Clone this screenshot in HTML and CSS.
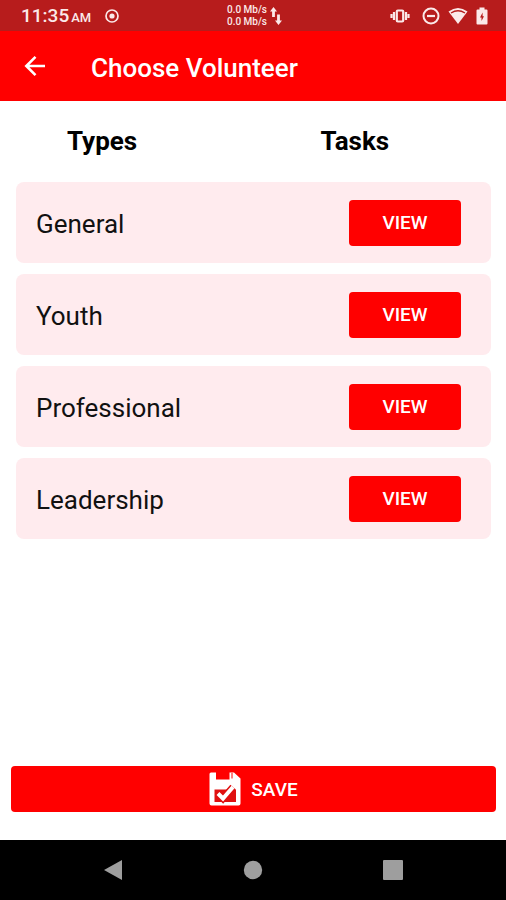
FILE: index.html
```html
<!DOCTYPE html>
<html lang="en">

<head>
    <meta charset="UTF-8">
    <meta name="viewport" content="width=device-width, initial-scale=1.0">
    <title>Choose Volunteer</title>
    <link rel="stylesheet" href="styles.css">
</head>

<body>
    <div class="status-bar">
        <div class="status-left">
            <div class="clock">
                <span>11:35</span>
                <span class="clock-period">AM</span>
            </div>
            <svg width="14" height="14" viewBox="0 0 14 14" fill="none" stroke="currentColor">
                <circle cx="7" cy="7" r="6" stroke-width="1.7" />
                <circle cx="7" cy="7" r="2.6" fill="currentColor" stroke="none" />
            </svg>
        </div>
        <div class="status-center">
            <div class="net-speed">
                <span>0.0 Mb/s</span>
                <span>0.0 Mb/s</span>
            </div>
            <svg width="12" height="20" viewBox="0 0 12 20" fill="currentColor">
                <path d="M3.5 1L7 5.5H4.9V11H2.1V5.5H0z" />
                <path d="M8.5 19L5 14.5H7.1V8.5H9.9V14.5H12z" />
            </svg>
        </div>
        <div class="status-right">
            <svg width="20" height="16" viewBox="0 0 20 16">
                <path d="M1.5 6V10M4 4V12M16 4V12M18.5 6V10" stroke="currentColor" stroke-width="2.2" fill="none" />
                <rect x="6.8" y="2.5" width="6.4" height="11" rx="1" fill="none" stroke="currentColor" stroke-width="2.2" />
            </svg>
            <svg width="18" height="18" viewBox="0 0 18 18" fill="none" stroke="currentColor">
                <circle cx="9" cy="9" r="7.5" stroke-width="2" />
                <path d="M5 9H13" stroke-width="2.2" />
            </svg>
            <svg width="20" height="18" viewBox="0 0 20 18">
                <path d="M0.5 4.5Q10 -2.5 19.5 4.5L10 17z" fill="currentColor" />
                <path d="M3 6Q10 1.5 17 6" fill="none" stroke="#b71c1c" stroke-width="1.3" />
            </svg>
            <svg width="12" height="18" viewBox="0 0 12 18">
                <path d="M3.5 0.5H8.5V2.5H10.5Q11.5 2.5 11.5 3.5V16.5Q11.5 17.5 10.5 17.5H1.5Q0.5 17.5 0.5 16.5V3.5Q0.5 2.5 1.5 2.5H3.5z" fill="currentColor" />
                <path d="M6.6 5.5L4 10.5H5.5V14L8 9.3H6.6z" fill="#b71c1c" />
            </svg>
        </div>
    </div>

    <header class="app-bar">
        <button class="back-button" aria-label="Back">
            <svg width="22" height="22" viewBox="0 0 22 22" fill="none" stroke="currentColor" stroke-width="2.6">
                <path d="M21 11H3M11.5 1.8L2.3 11L11.5 20.2" />
            </svg>
        </button>
        <h1>Choose Volunteer</h1>
    </header>

    <main>
        <table class="volunteer-table">
            <thead>
                <tr>
                    <th scope="col">Types</th>
                    <th scope="col">Tasks</th>
                </tr>
            </thead>
            <tbody>
                <tr>
                    <td>General</td>
                    <td><button class="btn view-button">VIEW</button></td>
                </tr>
                <tr>
                    <td>Youth</td>
                    <td><button class="btn view-button">VIEW</button></td>
                </tr>
                <tr>
                    <td>Professional</td>
                    <td><button class="btn view-button">VIEW</button></td>
                </tr>
                <tr>
                    <td>Leadership</td>
                    <td><button class="btn view-button">VIEW</button></td>
                </tr>
            </tbody>
        </table>

        <button class="btn save-button">
            <svg width="32" height="34" viewBox="0 0 32 34">
                <path d="M2 0.5H7V7.5H20.5V0.5H25L31.5 6.5V31.5Q31.5 33.5 29.5 33.5H2.5Q0.5 33.5 0.5 31.5V2Q0.5 0.5 2 0.5z" fill="#fff" />
                <path d="M23 1V6.5" stroke="#f00" stroke-width="1" />
                <rect x="5.5" y="17.5" width="21.5" height="12.5" fill="#e01010" />
                <path d="M9 21.5L14 26.5L24 15" fill="none" stroke="#e01010" stroke-width="7" />
                <path d="M9 21.5L14 26.5L24 15" fill="none" stroke="#fff" stroke-width="4" />
            </svg>
            SAVE
        </button>
    </main>

    <nav class="nav-bar">
        <button aria-label="Back">
            <svg width="20" height="22" viewBox="0 0 20 22"><path d="M19 1V21L1 11z" fill="currentColor" /></svg>
        </button>
        <button aria-label="Home">
            <svg width="20" height="20" viewBox="0 0 20 20"><circle cx="10" cy="10" r="9.2" fill="currentColor" /></svg>
        </button>
        <button aria-label="Recent apps">
            <svg width="20" height="20" viewBox="0 0 20 20"><rect width="20" height="20" rx="1" fill="currentColor" /></svg>
        </button>
    </nav>
</body>

</html>
```
FILE: styles.css
```css
* {
    box-sizing: border-box;
}

body {
    display: flex;
    flex-direction: column;
    min-height: 100vh;
    margin: 0;
    font-family: Roboto, sans-serif;
    background-color: #fff;
    color: #111;
}

button {
    padding: 0;
    border: none;
    background: none;
    color: inherit;
    font-family: inherit;
    cursor: pointer;
}

svg {
    display: block;
    flex-shrink: 0;
}

.status-bar {
    display: grid;
    grid-template-columns: 1fr auto 1fr;
    align-items: center;
    height: 31px;
    padding: 0 18px 0 21px;
    background-color: #b71c1c;
    color: #fbe9e9;
}

.status-left,
.status-center,
.status-right {
    display: flex;
    align-items: center;
}

.status-left {
    gap: 14px;
}

.status-center {
    gap: 3px;
}

.status-right {
    justify-content: flex-end;
    gap: 8px;
}

.status-right svg:first-child {
    margin-right: 4px;
}

.clock {
    display: flex;
    align-items: baseline;
    gap: 2px;
    font-size: 19px;
    font-weight: 500;
}

.clock-period {
    font-size: 13px;
}

.net-speed {
    display: flex;
    flex-direction: column;
    font-size: 10px;
    font-weight: 500;
    line-height: 12px;
}

.app-bar {
    display: flex;
    align-items: center;
    gap: 45px;
    height: 70px;
    padding: 4px 24px 0;
    background-color: #f00;
    color: #fff;
}

.back-button {
    margin-bottom: 4px;
}

.app-bar h1 {
    margin: 0;
    font-size: 26px;
    font-weight: 500;
}

main {
    display: flex;
    flex: 1;
    flex-direction: column;
    padding: 0 10px 28px 11px;
}

.volunteer-table {
    width: calc(100% - 10px);
    margin: 0 5px;
    border-spacing: 0 11px;
    table-layout: fixed;
}

.volunteer-table th {
    height: 59px;
    padding: 0 0 2px 51px;
    font-size: 26px;
    font-weight: 700;
    text-align: left;
    color: #000;
}

.volunteer-table th:last-child {
    padding-left: 67px;
}

.volunteer-table td {
    height: 81px;
    padding: 2px 0 0 20px;
    background-color: #ffebee;
    font-size: 26px;
}

.volunteer-table td:first-child {
    border-radius: 8px 0 0 8px;
}

.volunteer-table td:last-child {
    padding: 0 30px 0 0;
    border-radius: 0 8px 8px 0;
    text-align: right;
}

.btn {
    height: 46px;
    border-radius: 4px;
    background-color: #f00;
    color: #fff;
    font-size: 19px;
    font-weight: 500;
}

.view-button {
    width: 112px;
    vertical-align: middle;
}

.save-button {
    display: flex;
    align-items: center;
    justify-content: center;
    gap: 10px;
    margin-top: auto;
}

.nav-bar {
    display: flex;
    align-items: center;
    justify-content: space-between;
    height: 60px;
    padding: 0 103px;
    background-color: #000;
    color: #9e9e9e;
}
```
